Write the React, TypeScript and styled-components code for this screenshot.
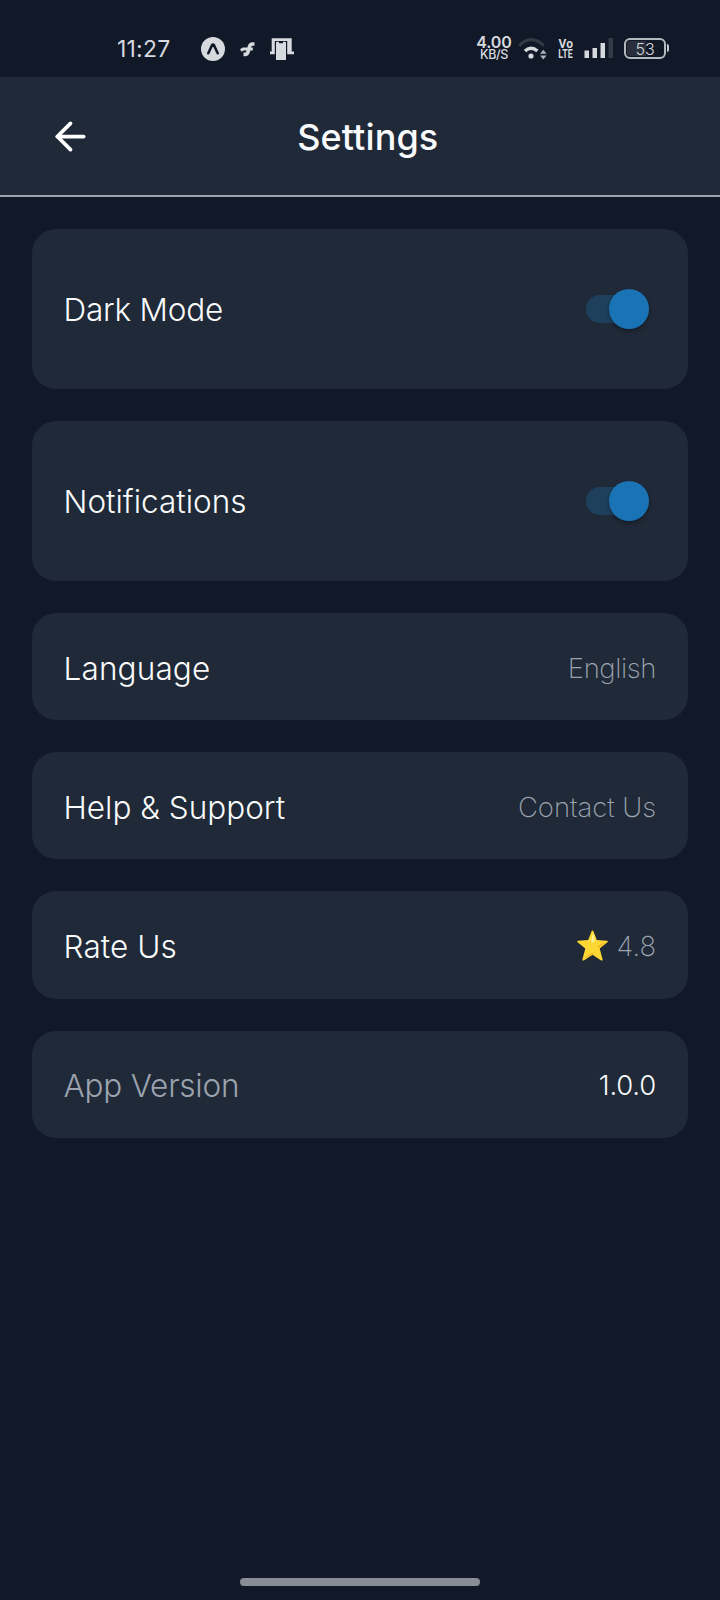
import React, { useState } from "react";
import styled, { createGlobalStyle } from "styled-components";
import { ArrowLeft } from "lucide-react";

const GlobalStyle = createGlobalStyle`
  * { box-sizing: border-box; }
  body { margin: 0; background: #111827; }
`;

const Screen = styled.div`
  display: flex;
  flex-direction: column;
  width: 720px;
  height: 1600px;
  background: #111827;
  color: #f9fafb;
  font-family: Inter, "Liberation Sans", sans-serif;
`;

const StatusBar = styled.div`
  display: flex;
  justify-content: space-between;
  height: 77px;
  padding: 36px 54px 0 117px;
  color: #d6d9de;
`;

const StatusGroup = styled.div`
  display: flex;
  align-items: center;
  height: 25px;
`;

const Clock = styled.span`
  width: 84px;
  font-size: 23px;
  line-height: 26px;
  letter-spacing: 0.2px;
  white-space: nowrap;
`;

const StatusIcon = styled.svg<{ $gap?: number }>`
  flex: none;
  display: block;
  margin-left: ${(p) => p.$gap ?? 0}px;
`;

const Speed = styled.div`
  display: flex;
  flex-direction: column;
  align-items: center;
  width: 36px;
  font-weight: 600;
`;

const SpeedValue = styled.span`
  font-size: 16px;
  line-height: 13px;
  letter-spacing: -0.1px;
`;

const SpeedUnit = styled.span`
  font-size: 12.5px;
  font-weight: 500;
  line-height: 12px;
  letter-spacing: -0.4px;
`;

const Volte = styled.div`
  display: flex;
  flex-direction: column;
  align-items: center;
  width: 17px;
  margin-left: 10px;
  font: 700 13px/10px Roboto, sans-serif;
`;

const VolteLine = styled.span<{ $stretch: number }>`
  transform: scaleX(${(p) => p.$stretch});
`;

const Battery = styled.div`
  position: relative;
  display: flex;
  align-items: center;
  justify-content: center;
  width: 42px;
  height: 21px;
  margin-left: 11px;
  border: 2px solid #b4b8bf;
  border-radius: 6px;
  background: linear-gradient(to right, #292f3c 53%, transparent 53%) content-box;
  padding: 1px;
  font-size: 16px;
  font-weight: 350;
  line-height: 18px;

  &::after {
    content: "";
    position: absolute;
    left: 41px;
    top: 4px;
    width: 2px;
    height: 8px;
    border-radius: 0 2px 2px 0;
    background: #c5c9cf;
  }
`;

const Header = styled.header`
  display: grid;
  grid-template-columns: 1fr auto 1fr;
  align-items: center;
  height: 120px;
  padding: 0 32px 0 47.5px;
  background: #1f2937;
  border-bottom: 2px solid #9ca3af;
`;

const BackButton = styled.button`
  display: flex;
  justify-self: start;
  padding: 0;
  border: 0;
  background: none;
  color: #fff;
`;

const Title = styled.h1`
  margin: 0;
  padding-top: 2px;
  font-size: 36px;
  font-weight: 500;
  line-height: 44px;
  letter-spacing: 0.1px;
`;

const List = styled.main`
  flex: 1;
  display: flex;
  flex-direction: column;
  gap: 32px;
  padding: 32px;
`;

const Card = styled.section<{ $tall?: boolean }>`
  display: flex;
  align-items: center;
  justify-content: space-between;
  height: ${(p) => (p.$tall ? 160 : 107.2)}px;
  padding: 0 32px;
  border-radius: 24px;
  background: #1f2937;
`;

const Label = styled.span<{ $muted?: boolean; $spacing?: number; $drop?: number }>`
  margin-left: -0.5px;
  padding-top: ${(p) => p.$drop ?? 4}px;
  font-size: 31.5px;
  font-weight: 330;
  line-height: 40px;
  letter-spacing: ${(p) => p.$spacing ?? 0}px;
  color: ${(p) => (p.$muted ? "#9ca3af" : "#f9fafb")};
`;

const Value = styled.span<{ $bright?: boolean; $spacing?: number }>`
  display: flex;
  align-items: center;
  gap: 9px;
  padding-top: 2px;
  font-size: 27.5px;
  font-weight: ${(p) => (p.$bright ? 280 : 250)};
  line-height: 36px;
  letter-spacing: ${(p) => p.$spacing ?? 0}px;
  color: ${(p) => (p.$bright ? "#f9fafb" : "#9ca3af")};
`;

const Track = styled.button<{ $on: boolean }>`
  display: flex;
  align-items: center;
  justify-content: ${(p) => (p.$on ? "flex-end" : "flex-start")};
  width: 56px;
  height: 28px;
  margin-right: 14px;
  padding: 0;
  border: 0;
  border-radius: 14px;
  background: ${(p) => (p.$on ? "#1e405d" : "#4b5563")};
`;

const Thumb = styled.span`
  flex: none;
  width: 40px;
  height: 40px;
  margin: 0 -7px;
  border-radius: 50%;
  background: #1a73b4;
  box-shadow: 0 2px 4px rgba(0, 0, 0, 0.35);
`;

const HomeIndicator = styled.div`
  align-self: center;
  width: 240px;
  height: 8px;
  margin-bottom: 14px;
  border-radius: 4px;
  background: #888d95;
`;

function Toggle({ label }: { label: string }) {
  const [on, setOn] = useState(true);
  return (
    <Track $on={on} role="switch" aria-checked={on} aria-label={label} onClick={() => setOn(!on)}>
      <Thumb />
    </Track>
  );
}

function Star() {
  return (
    <svg width="31" height="31" viewBox="0 0 31 31">
      <path
        d="M15.5.6c.5 0 .8.3 1 .8l3.300 8.700 10.100.6c1 .1 1.300 1 .5 1.600l-7.700 6.300 2.900 10.800c.2.9-.6 1.500-1.400 1l-8.700-5.700-8.700 5.700c-.8.5-1.600-.1-1.400-1l2.900-10.800L.6 12.300c-.8-.6-.5-1.500.5-1.600l10.100-.6 3.300-8.700c.2-.5.500-.8 1-.8z"
        fill="#fdd835"
      />
      <path d="M15.800 3.200l-1.800 8.200 3.300 1.400c.5-2.600.1-6-1.500-9.600z" fill="#fff59d" />
      <path d="M28.700 11.800l-8.300 4.100 1.300 1.700c2.800-1.300 5-3.200 7-5.800zM7.200 28.600l8.200-6 1.400 2z" fill="#f9b825" />
    </svg>
  );
}

export default function App() {
  return (
    <>
      <GlobalStyle />
      <Screen>
        <StatusBar>
          <StatusGroup>
            <Clock>11:27</Clock>
            <StatusIcon width="24" height="24" viewBox="0 0 24 24">
              <circle cx="12" cy="12" r="12" fill="#d6d9de" />
              <path d="M7.300 16.200L11 8.300q1-1.600 2 0l3.700 7.900" fill="none" stroke="#111827" strokeWidth="2.600" strokeLinecap="round" strokeLinejoin="round" />
            </StatusIcon>
            <StatusIcon $gap={15} width="16" height="16" viewBox="0 0 16 16" fill="none" stroke="#d6d9de">
              <path d="M14.500 3H12.500q-2.300 0-3 2.500L8.200 10.500q-.7 2.900-3.500 2.900H3.500" strokeWidth="3.600" />
              <path d="M.8 9.400L3.200 7.900H12.800" strokeWidth="3" />
            </StatusIcon>
            <StatusIcon $gap={14} width="25" height="22" viewBox="0 0 25 22">
              <path d="M1.700.3h20V13.500H24V16.300H0V13.500H1.700z" fill="#d6d9de" />
              <path d="M4.800 3H17.200V22H4.800z" fill="#111827" />
              <path d="M7 3.800h2v1.400h4V3.800h2q1 0 1 1V22H6V4.800q0-1 1-1z" fill="#d6d9de" />
            </StatusIcon>
          </StatusGroup>
          <StatusGroup>
            <Speed>
              <SpeedValue>4.00</SpeedValue>
              <SpeedUnit>KB/S</SpeedUnit>
            </Speed>
            <StatusIcon $gap={6} width="29" height="24" viewBox="0 0 29 24" fill="none">
              <path d="M1.200 8.600Q13.200-3.200 25.700 8.600" stroke="#343a47" strokeWidth="3" />
              <path d="M7 14q6.200-5.600 12.400 0" stroke="#d6d9de" strokeWidth="3.400" />
              <circle cx="13" cy="19" r="2.600" fill="#d6d9de" />
              <path d="M22 16.800l3.300-4 3.300 4zM22 18.600l3.300 4 3.300-4z" fill="#aeb2b9" />
            </StatusIcon>
            <Volte>
              <VolteLine $stretch={0.92}>Vo</VolteLine>
              <VolteLine $stretch={0.68}>LTE</VolteLine>
            </Volte>
            <StatusIcon $gap={10} width="29" height="21" viewBox="0 0 29 21" fill="#d6d9de">
              <rect x="0.500" y="12.500" width="4.500" height="7.500" />
              <rect x="8.500" y="10" width="4.500" height="10" />
              <rect x="16.500" y="5" width="4.500" height="15" />
              <rect x="24.500" y="0" width="4.500" height="20" fill="#343a47" />
            </StatusIcon>
            <Battery>53</Battery>
          </StatusGroup>
        </StatusBar>

        <Header>
          <BackButton aria-label="Back">
            <ArrowLeft size={45} strokeWidth={2} />
          </BackButton>
          <Title>Settings</Title>
        </Header>

        <List>
          <Card $tall>
            <Label $drop={2} $spacing={-0.2}>Dark Mode</Label>
            <Toggle label="Dark Mode" />
          </Card>
          <Card $tall>
            <Label $drop={2}>Notifications</Label>
            <Toggle label="Notifications" />
          </Card>
          <Card>
            <Label $spacing={0.15}>Language</Label>
            <Value $spacing={-0.4}>English</Value>
          </Card>
          <Card>
            <Label>Help &amp; Support</Label>
            <Value $spacing={-0.06}>Contact Us</Value>
          </Card>
          <Card>
            <Label $spacing={0.1}>Rate Us</Label>
            <Value>
              <Star />
              4.8
            </Value>
          </Card>
          <Card>
            <Label $muted $spacing={-0.2}>App Version</Label>
            <Value $bright $spacing={-0.2}>1.0.0</Value>
          </Card>
        </List>
        <HomeIndicator />
      </Screen>
    </>
  );
}
